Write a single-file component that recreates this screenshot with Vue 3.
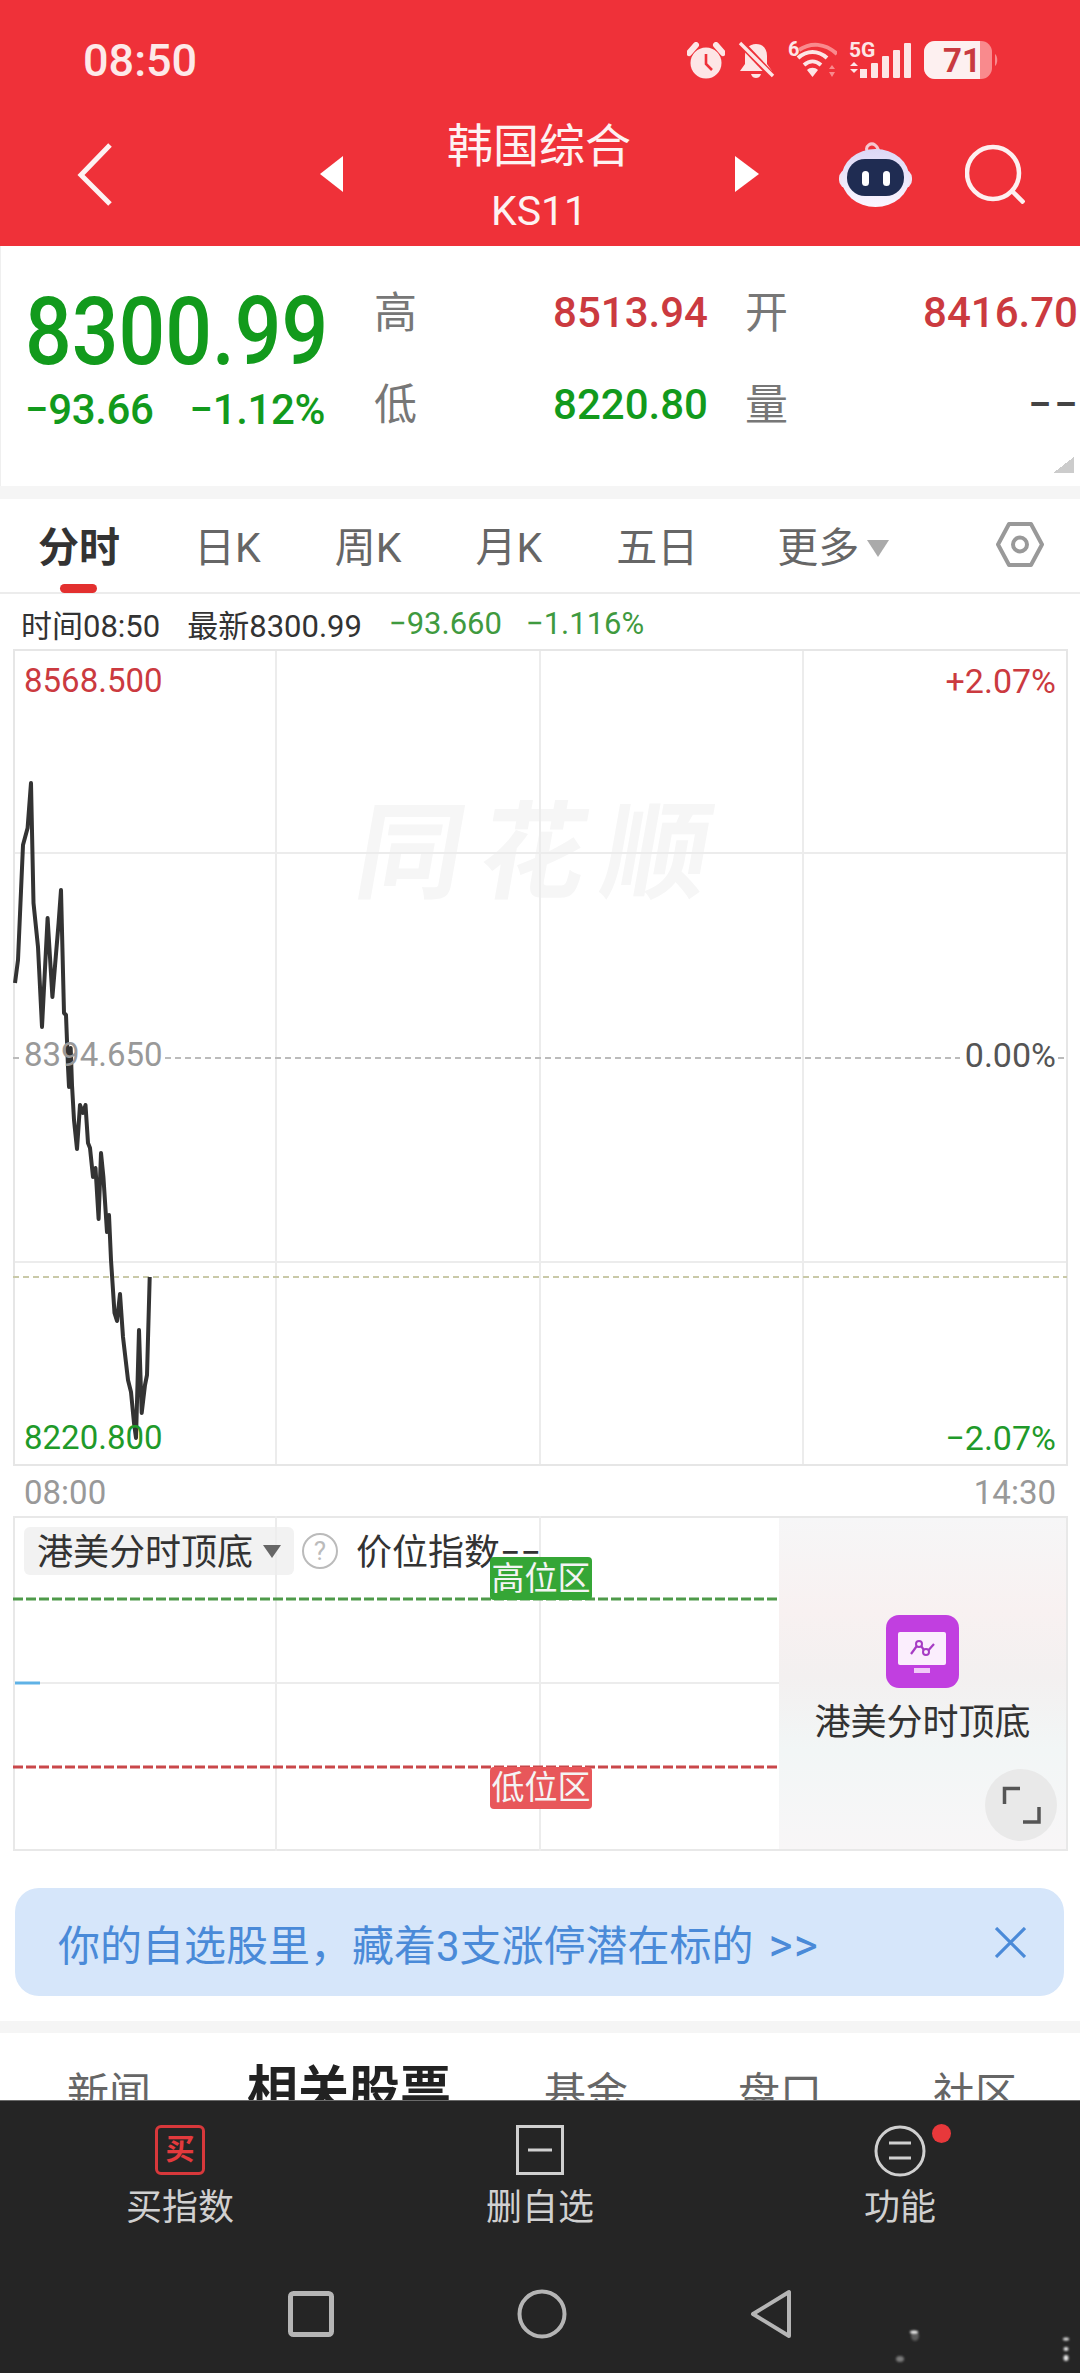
<script setup>
const periodTabs = ['日K', '周K', '月K', '五日']
const newsTabs = [
  { name: '新闻' },
  { name: '相关股票', active: true },
  { name: '基金' },
  { name: '盘口' },
  { name: '社区' },
]

// traced from the intraday curve, in page pixels
const pricePoints = [
  [15, 983], [18, 960], [23, 845], [27.6, 828], [31, 783], [33.5, 903], [38, 947], [42, 1027],
  [47.6, 918], [52.4, 997], [58.6, 923], [61, 890], [64, 1013], [66, 1015], [68, 1067], [69, 1087],
  [70.7, 1048], [72, 1085], [74, 1120], [77, 1149], [80, 1105], [83, 1113], [85.5, 1105], [88, 1143],
  [90, 1148], [93, 1177], [95.5, 1168], [98.6, 1219], [101, 1153], [103.4, 1177], [107, 1232],
  [109, 1215], [111, 1260], [114.5, 1313], [117, 1321], [120, 1294], [123, 1337], [128, 1380],
  [131, 1392], [134, 1423], [136, 1438], [139, 1330], [141.7, 1413], [145, 1385], [147, 1375], [149.7, 1277],
]
const priceLine = pricePoints.map((p) => p.join(',')).join(' ')
</script>

<template>
  <div class="page">
    <header class="top">
      <div class="status">
        <span class="clock">08:50</span>
        <div class="status-icons">
          <svg width="38" height="37" viewBox="0 0 38 37">
            <circle cx="19" cy="21" r="15.5" fill="#fde6e6"/>
            <path d="M19 12v10l6 6" fill="none" stroke="#ef3139" stroke-width="2.6"/>
            <path d="M2 11 9 3M36 11 29 3" stroke="#fde6e6" stroke-width="6" stroke-linecap="round"/>
          </svg>
          <svg width="38" height="38" viewBox="0 0 38 38">
            <path d="M19 3c7 0 11 5 11 12v8l5 7H3l5-7v-8C8 8 12 3 19 3Z" fill="#fde6e6"/>
            <path d="M14 33h10c-1 3-3 4-5 4s-4-1-5-4Z" fill="#fde6e6"/>
            <path d="M3 1 36 36" stroke="#ef3139" stroke-width="7"/>
            <path d="M3 2 36 35" stroke="#fde6e6" stroke-width="3.4"/>
          </svg>
          <svg width="50" height="39" viewBox="0 0 50 39">
            <text x="1" y="15" class="tiny-6">6</text>
            <path d="M12 9C24 1 38 2 50 13" fill="none" stroke="#f98a8d" stroke-width="4"/>
            <path d="M11 17c9-8 20-8 29 0M17 24c6-5 11-5 17 0" fill="none" stroke="#fde6e6" stroke-width="4"/>
            <path d="M25.500 36 20 29c3-3 8-3 11 0Z" fill="#fde6e6"/>
            <path d="M45 24l3 4h-6ZM45 36l3-5h-6Z" fill="#f98a8d"/>
          </svg>
          <svg width="63" height="38" viewBox="0 0 63 38">
            <text x="0" y="16" class="tiny-5g">5G</text>
            <path d="M5 21l4 4H1ZM5 32l4-4H1Z" fill="#fde6e6"/>
            <rect x="11" y="28" width="7" height="9" fill="#fde6e6"/>
            <rect x="22" y="22" width="7" height="15" rx="1" fill="#fde6e6"/>
            <rect x="33" y="15" width="7" height="22" rx="1" fill="#fde6e6"/>
            <rect x="44" y="9" width="7" height="28" rx="1" fill="#fde6e6"/>
            <rect x="55" y="2" width="7" height="35" rx="1" fill="#fde6e6"/>
          </svg>
          <svg width="75" height="38" viewBox="0 0 75 38">
            <rect x="0" y="0" width="68" height="38" rx="11" fill="#f98a8d"/>
            <path d="M11 0h45v38H11A11 11 0 0 1 0 27V11A11 11 0 0 1 11 0Z" fill="#fdf0f0"/>
            <path d="M71 13c3 2 3 10 0 12Z" fill="#f98a8d"/>
            <text x="38" y="31" text-anchor="middle" class="tiny-bat">71</text>
          </svg>
        </div>
      </div>
      <nav class="nav">
        <svg class="back" width="36" height="63" viewBox="0 0 36 63">
          <path d="M33 2 4 32l29 29" fill="none" stroke="#fdf2f2" stroke-width="5"/>
        </svg>
        <svg class="arrow-left" width="23" height="36" viewBox="0 0 23 36"><path d="M23 0v36L0 18Z" fill="#fff"/></svg>
        <div class="title">
          <div class="title-name">韩国综合</div>
          <div class="title-code">KS11</div>
        </div>
        <svg class="arrow-right" width="24" height="36" viewBox="0 0 24 36"><path d="M0 0v36l24-18Z" fill="#fff"/></svg>
        <svg class="robot" width="73" height="67" viewBox="0 0 73 67">
          <defs>
            <linearGradient id="robotHead" x1="0" y1="0" x2="0" y2="1">
              <stop offset="0" stop-color="#dcd8f6"/>
              <stop offset="1" stop-color="#fbf6ff"/>
            </linearGradient>
          </defs>
          <path d="M28 10c-2-5 4-9 8-6 3 2 3 5 4 6" fill="none" stroke="#f6c6cf" stroke-width="3"/>
          <rect x="0" y="28" width="73" height="20" rx="9" fill="#f0e4f4"/>
          <ellipse cx="36.500" cy="37" rx="34" ry="29" fill="url(#robotHead)"/>
          <rect x="8" y="18" width="57" height="37" rx="18" fill="#1f2c52"/>
          <rect x="23" y="30" width="7" height="15" rx="3.500" fill="#fff"/>
          <rect x="44" y="30" width="7" height="15" rx="3.500" fill="#fff"/>
        </svg>
        <svg class="search" width="60" height="60" viewBox="0 0 60 60">
          <circle cx="28" cy="29" r="26" fill="none" stroke="#fdf0f0" stroke-width="4.500"/>
          <path d="M47 47 59 59" stroke="#fdf0f0" stroke-width="4.500"/>
        </svg>
      </nav>
    </header>

    <section class="quote">
      <div class="quote-main">
        <div class="price">8300.99</div>
        <div class="change"><span>−93.66</span><span>−1.12%</span></div>
      </div>
      <div class="stats">
        <div class="stat"><span class="stat-label">高</span><span class="red">8513.94</span></div>
        <div class="stat"><span class="stat-label">开</span><span class="red">8416.70</span></div>
        <div class="stat"><span class="stat-label">低</span><span class="green">8220.80</span></div>
        <div class="stat"><span class="stat-label">量</span><span class="dash">− −</span></div>
      </div>
      <span class="corner"></span>
    </section>

    <div class="band"></div>

    <div class="period-tabs">
      <span class="period-tab active">分时</span>
      <span v-for="tab in periodTabs" :key="tab" class="period-tab">{{ tab }}</span>
      <span class="period-tab more">更多<i class="more-caret"></i></span>
      <svg class="hex" width="48" height="45" viewBox="0 0 48 45">
        <path d="M13 2h22l11 20.500L35 43H13L2 22.500Z" fill="none" stroke="#999" stroke-width="4" stroke-linejoin="round"/>
        <circle cx="24" cy="22.500" r="7" fill="none" stroke="#999" stroke-width="4"/>
      </svg>
    </div>

    <div class="info-row">
      <span>时间08:50</span>
      <span>最新8300.99</span>
      <span class="info-green">−93.660</span>
      <span class="info-green info-pct">−1.116%</span>
    </div>

    <div class="chart">
      <span class="watermark">同花顺</span>
      <svg class="chart-svg" width="1055" height="817" viewBox="13 649 1055 817">
        <g stroke="#ececec" stroke-width="2">
          <path d="M276 649v817M540 649v817M803 649v817M13 853h1055M13 1262h1055"/>
          <rect x="14" y="650" width="1053" height="815" fill="none" stroke="#e6e6e6"/>
        </g>
        <path d="M13 1058h9M165 1058h795M1058 1058h9" stroke="#bbb" stroke-width="2" stroke-dasharray="6 4"/>
        <path d="M13 1277h1054" stroke="#c9c9a8" stroke-width="2" stroke-dasharray="6 4"/>
        <polyline :points="priceLine" fill="none" stroke="#333" stroke-width="4" stroke-linejoin="round"/>
      </svg>
      <span class="axis axis-top red">8568.500</span>
      <span class="axis axis-mid grey">8394.650</span>
      <span class="axis axis-low green-soft">8220.800</span>
      <span class="axis axis-r axis-top red">+2.07%</span>
      <span class="axis axis-r axis-mid zero">0.00%</span>
      <span class="axis axis-r axis-low green-soft">−2.07%</span>
    </div>

    <div class="time-axis"><span>08:00</span><span>14:30</span></div>

    <div class="sub-chart">
      <div class="sub-plot">
        <svg class="sub-svg" width="766" height="335" viewBox="13 1516 766 335">
          <path d="M276 1516v335M540 1516v335M13 1683h766" stroke="#ececec" stroke-width="2"/>
          <path d="M13 1599h766" stroke="#4f9a4a" stroke-width="3" stroke-dasharray="10 3"/>
          <path d="M13 1767h766" stroke="#c9474a" stroke-width="3" stroke-dasharray="10 3"/>
          <path d="M15 1683h25" stroke="#5fb2e6" stroke-width="3"/>
        </svg>
        <div class="sub-head">
          <div class="sub-pill">港美分时顶底<i class="pill-caret"></i></div>
          <span class="help">?</span>
          <span class="sub-index">价位指数−−</span>
        </div>
        <span class="zone zone-high">高位区</span>
        <span class="zone zone-low">低位区</span>
      </div>
      <div class="sub-promo">
        <svg width="73" height="73" viewBox="0 0 73 73">
          <rect width="73" height="73" rx="13" fill="#c13fe0"/>
          <rect x="12" y="17" width="48" height="33" rx="2" fill="#fbeefd"/>
          <rect x="28" y="53" width="16" height="5" fill="#f1c9f8"/>
          <path d="M25 39 33 28 40 38 48 29" fill="none" stroke="#a63cc4" stroke-width="2.200"/>
          <circle cx="33" cy="29" r="3" fill="#fbeefd" stroke="#a63cc4" stroke-width="2"/>
          <circle cx="40" cy="37" r="3" fill="#fbeefd" stroke="#a63cc4" stroke-width="2"/>
        </svg>
        <div class="promo-name">港美分时顶底</div>
        <div class="expand">
          <svg width="72" height="72" viewBox="0 0 72 72">
            <path d="M19.500 35V19.500H35M54 38v15H38" fill="none" stroke="#555" stroke-width="3.500"/>
          </svg>
        </div>
      </div>
    </div>

    <div class="banner">
      <span>你的自选股里，藏着3支涨停潜在标的<span class="banner-more">&gt;&gt;</span></span>
      <svg width="31" height="31" viewBox="0 0 31 31">
        <path d="M1 1 30 30M30 1 1 30" stroke="#4a8ad8" stroke-width="3.200"/>
      </svg>
    </div>

    <div class="band band-low"></div>

    <div class="news-tabs">
      <span v-for="tab in newsTabs" :key="tab.name" class="news-tab" :class="{ active: tab.active }">{{ tab.name }}</span>
    </div>

    <footer class="bottom">
      <div class="actions">
        <div class="action">
          <span class="buy-icon">买</span>
          <span class="action-label">买指数</span>
        </div>
        <div class="action">
          <svg width="48" height="50" viewBox="0 0 48 50">
            <rect x="1.500" y="1.500" width="45" height="47" fill="none" stroke="#d0d0d0" stroke-width="3"/>
            <path d="M12 25h24" stroke="#d0d0d0" stroke-width="3"/>
          </svg>
          <span class="action-label">删自选</span>
        </div>
        <div class="action">
          <div class="fn-icon">
            <svg width="52" height="52" viewBox="0 0 52 52">
              <circle cx="26" cy="26" r="24" fill="none" stroke="#d0d0d0" stroke-width="3"/>
              <path d="M15 18h22M15 33h22" stroke="#d0d0d0" stroke-width="3"/>
            </svg>
            <i class="fn-dot"></i>
          </div>
          <span class="action-label">功能</span>
        </div>
      </div>
      <div class="sys-nav">
        <svg width="46" height="46" viewBox="0 0 46 46">
          <rect x="2.500" y="2.500" width="41" height="41" rx="3" fill="none" stroke="#b5b5b5" stroke-width="5"/>
        </svg>
        <svg width="50" height="50" viewBox="0 0 50 50">
          <circle cx="25" cy="25" r="22.500" fill="none" stroke="#b5b5b5" stroke-width="4"/>
        </svg>
        <svg width="42" height="50" viewBox="0 0 42 50">
          <path d="M39 3v44L3 25Z" fill="none" stroke="#b5b5b5" stroke-width="4" stroke-linejoin="round"/>
        </svg>
      </div>
      <svg class="smudge" width="220" height="73" viewBox="860 2300 220 73">
        <g fill="#fff">
          <ellipse cx="914" cy="2332" rx="4" ry="1.500"/>
          <ellipse cx="915" cy="2336" rx="4" ry="5" opacity=".25"/>
          <ellipse cx="900" cy="2359" rx="4" ry="3" opacity=".4"/>
          <ellipse cx="1066" cy="2339" rx="3" ry="1.500" opacity=".9"/>
          <ellipse cx="1066" cy="2349" rx="2.500" ry="2" opacity=".9"/>
          <ellipse cx="1066" cy="2358" rx="2.500" ry="3" opacity=".9"/>
        </g>
      </svg>
    </footer>
  </div>
</template>

<style scoped>
* { box-sizing: border-box; }

.page {
  position: relative;
  width: 1080px;
  height: 2373px;
  overflow: hidden;
  background: #fff;
  font-family: Roboto, "Noto Sans CJK SC", sans-serif;
  color: #333;
}

/* Red header */
.top { height: 246px; background: #ef3139; color: #fdf0f0; }
.status {
  height: 124px;
  display: flex;
  align-items: center;
  justify-content: space-between;
  padding: 0 81px 4px 83px;
}
.clock { font-size: 45px; font-weight: 500; line-height: 50px; color: #fde9e9; margin-top: 2px; }
.status-icons { display: flex; align-items: center; gap: 12px; }
.tiny-6 { font: 700 20px Roboto, sans-serif; fill: #fde6e6; }
.tiny-5g { font: 700 21px Roboto, sans-serif; fill: #fde6e6; }
.tiny-bat { font: 700 33px Roboto, sans-serif; fill: #c93a40; }

.nav {
  height: 122px;
  display: flex;
  align-items: center;
  padding: 0 0 22px 77px;
}
.arrow-left { margin-left: 207px; }
.title { width: 392px; text-align: center; margin-top: 6px; }
.title-name { font-size: 46px; line-height: 50px; color: #fdf2f2; }
.title-code { font-size: 41px; line-height: 46px; margin-top: 17px; color: #fdf2f2; }
.robot { margin-left: 80px; }
.search { margin-left: 53px; }

/* Quote block */
.quote {
  position: relative;
  height: 240px;
  display: flex;
  padding: 44px 0 0 24px;
  border-left: 1px solid #efefef;
}
.quote-main { width: 349px; }
.price {
  font-size: 94px;
  font-weight: 500;
  line-height: 84px;
  color: #129a1c;
  transform: scaleX(.875);
  transform-origin: left center;
}
.change {
  width: 300px;
  display: flex;
  justify-content: space-between;
  margin-top: 13px;
  font-size: 42px;
  font-weight: 500;
  line-height: 46px;
  letter-spacing: -.4px;
  color: #129a1c;
}
.stats {
  display: grid;
  grid-template-columns: 334px 333px;
  grid-auto-rows: 46px;
  gap: 46px 37px;
  font-size: 42px;
  line-height: 46px;
}
.stat { display: flex; justify-content: space-between; }
.stat > span:last-child { font-weight: 500; }
.stat-label { color: #777; font-size: 43px; }
.red { color: #cb3a3f; }
.green { color: #129a1c; }
.stat .dash { color: #444; font-weight: 400; word-spacing: -8px; }
.corner {
  position: absolute;
  right: 6px;
  bottom: 13px;
  width: 21px;
  height: 16px;
  background: linear-gradient(to bottom right, transparent 50%, #ccc 50%);
}

.band { height: 13px; background: #f5f5f5; }
.band-low { height: 12px; margin-top: 25px; }

/* Period tabs */
.period-tabs {
  height: 95px;
  display: flex;
  align-items: flex-start;
  gap: 74px;
  padding: 26px 36px 0 38px;
  border-bottom: 2px solid #ececec;
  font-size: 41px;
  line-height: 46px;
  color: #666;
}
.period-tab { position: relative; }
.period-tab.active { font-weight: 700; color: #333; }
.period-tab.active::after {
  content: "";
  position: absolute;
  left: 22px;
  top: 59px;
  width: 37px;
  height: 9px;
  border-radius: 5px;
  background: #e3302f;
}
.more { margin-left: 5px; display: flex; align-items: center; }
.more-caret {
  width: 0;
  height: 0;
  margin-left: 8px;
  border-left: 11px solid transparent;
  border-right: 11px solid transparent;
  border-top: 17px solid #aaa;
}
.hex { margin-left: auto; margin-top: -3px; }

.info-row {
  height: 55px;
  display: flex;
  align-items: center;
  gap: 27px;
  padding: 4px 0 0 21px;
  font-size: 31px;
  color: #333;
}
.info-green { color: #3f9a3f; }
.info-pct { margin-left: -3px; }

/* Intraday chart */
.chart {
  position: relative;
  width: 1055px;
  height: 817px;
  margin-left: 13px;
}
.chart-svg { position: absolute; left: 0; top: 0; }
.watermark {
  position: absolute;
  left: 345px;
  top: 140px;
  font-size: 106px;
  line-height: 130px;
  font-weight: 700;
  letter-spacing: 17px;
  color: #f6f6f6;
  white-space: nowrap;
  transform: skewX(-10deg);
}
.axis {
  position: absolute;
  left: 11px;
  font-size: 33px;
  line-height: 40px;
}
.axis-r { left: auto; right: 12px; font-size: 34px; }
.axis-top { top: 12px; }
.axis-mid { top: 386px; }
.axis-low { top: 769px; }
.grey { color: #999; }
.zero { color: #555; }
.green-soft { color: #1f9a2a; }

.time-axis {
  height: 50px;
  display: flex;
  justify-content: space-between;
  align-items: center;
  padding: 2px 24px 0;
  font-size: 33px;
  color: #999;
}

/* Secondary chart */
.sub-chart {
  width: 1055px;
  height: 335px;
  margin-left: 13px;
  display: flex;
  border: 2px solid #e8e8e8;
}
.sub-plot { position: relative; flex: 1; }
.sub-svg { position: absolute; left: -2px; top: -2px; }
.sub-head {
  position: absolute;
  left: 9px;
  top: 9px;
  display: flex;
  align-items: center;
}
.sub-pill {
  width: 270px;
  height: 48px;
  display: flex;
  align-items: center;
  padding: 0 0 4px 13px;
  border-radius: 6px;
  background: rgba(238, 238, 238, .75);
  font-size: 36px;
  color: #333;
}
.pill-caret {
  width: 0;
  height: 0;
  margin: 4px 0 0 10px;
  border-left: 9px solid transparent;
  border-right: 9px solid transparent;
  border-top: 13px solid #666;
}
.help {
  width: 36px;
  height: 36px;
  margin-left: 8px;
  border: 2px solid #bbb;
  border-radius: 50%;
  text-align: center;
  font-size: 26px;
  line-height: 32px;
  color: #bbb;
}
.sub-index { margin: -5px 0 0 18px; font-size: 36px; color: #333; }
.zone {
  position: absolute;
  left: 475px;
  width: 102px;
  border-radius: 4px;
  text-align: center;
  font-size: 33px;
  color: #f4f4f4;
}
.zone-high { top: 39px; height: 43px; line-height: 43px; background: #35a636; }
.zone-low { top: 249px; height: 42px; line-height: 42px; background: #e8575a; }
.sub-promo {
  position: relative;
  width: 287px;
  display: flex;
  flex-direction: column;
  align-items: center;
  padding-top: 97px;
  background: linear-gradient(#f6f6f7, #f8f1f1 28%, #f3f0f0 48%, #f2f6f6 70%, #f8f6f7);
}
.promo-name { margin-top: 16px; font-size: 36px; line-height: 38px; color: #333; }
.expand {
  position: absolute;
  left: 206px;
  top: 251px;
  width: 72px;
  height: 72px;
  border-radius: 50%;
  background: #e9e9e9;
}

.banner {
  height: 108px;
  margin: 37px 16px 0 15px;
  display: flex;
  align-items: center;
  justify-content: space-between;
  padding: 0 38px 0 43px;
  border-radius: 24px;
  background: #d6e6fa;
  font-size: 42px;
  color: #4a8ad8;
}
.banner-more { margin-left: 15px; font-size: 46px; letter-spacing: 1px; }

.news-tabs {
  height: 67px;
  overflow: hidden;
  display: grid;
  grid-template-columns: 180px 297px 194px 195px auto;
  align-items: baseline;
  padding: 30px 0 0 67px;
  font-size: 42px;
  line-height: 56px;
  color: #666;
}
.news-tab.active { font-size: 51px; font-weight: 700; color: #222; }

/* Bottom bar */
.bottom {
  position: relative;
  height: 273px;
  background: #252525;
  border-top: 1px solid #6a6a6a;
}
.actions {
  height: 188px;
  display: grid;
  grid-template-columns: repeat(3, 1fr);
  padding-top: 24px;
}
.action { display: flex; flex-direction: column; align-items: center; }
.action-label {
  margin-top: 10px;
  font-size: 36px;
  line-height: 46px;
  color: #d0d0d0;
}
.buy-icon {
  width: 50px;
  height: 50px;
  border: 3px solid #d8383b;
  border-radius: 6px;
  text-align: center;
  font-size: 29px;
  font-weight: 700;
  line-height: 44px;
  color: #e33a3d;
}
.fn-icon { position: relative; height: 50px; }
.fn-dot {
  position: absolute;
  left: 58px;
  top: -1px;
  width: 19px;
  height: 19px;
  border-radius: 50%;
  background: #e8383b;
}
.sys-nav { display: flex; align-items: center; justify-content: center; gap: 183px; }
.smudge { position: absolute; left: 860px; top: 199px; filter: blur(1.2px); }
</style>
